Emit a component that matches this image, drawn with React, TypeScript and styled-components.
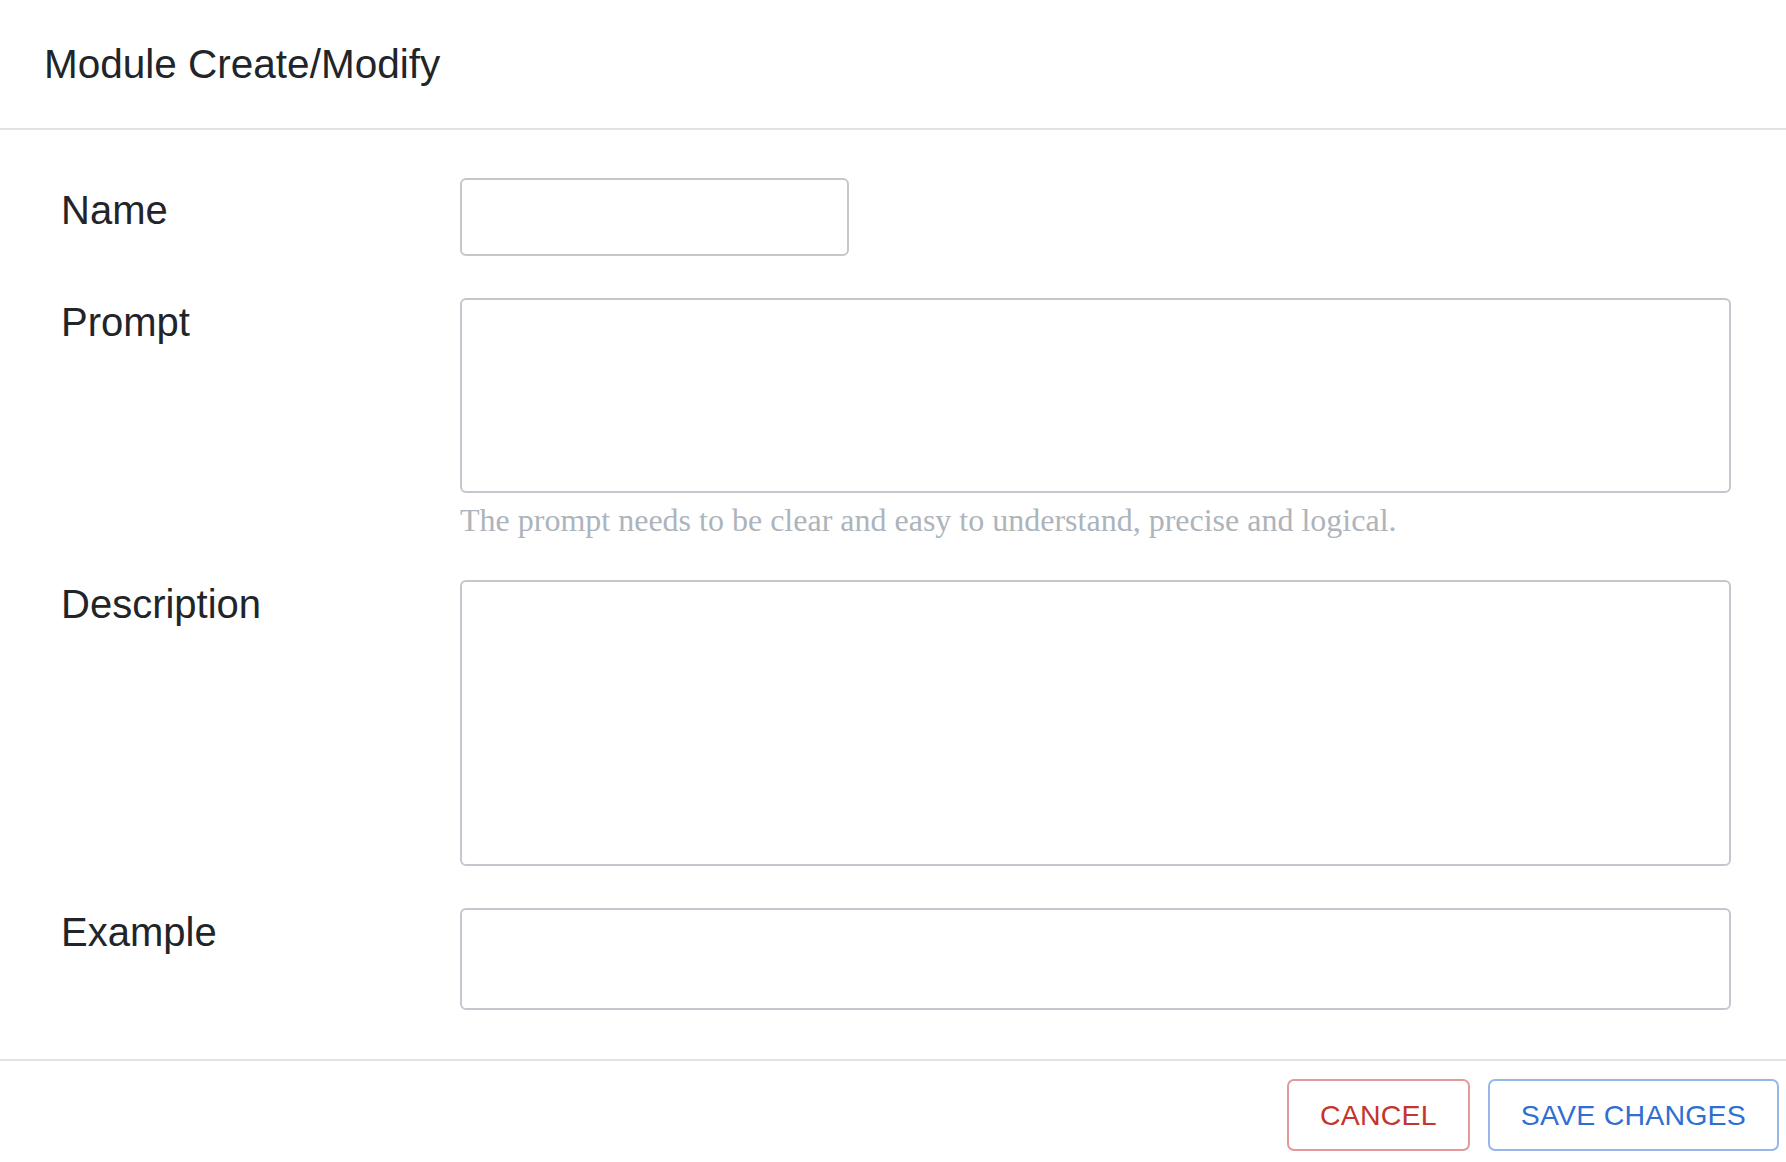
import React from "react";
import styled, { createGlobalStyle } from "styled-components";

const Global = createGlobalStyle`
  html, body { margin: 0; padding: 0; background: #ffffff; }
  body { font-family: "Liberation Sans", Arial, sans-serif; color: #212529; }
  * { box-sizing: border-box; }
`;

const Modal = styled.div`
  width: 1786px;
  min-height: 1162px;
  background: #fff;
  display: flex;
  flex-direction: column;
`;

const Header = styled.header`
  height: 130px;
  padding: 0 44px;
  display: flex;
  align-items: center;
  border-bottom: 2px solid #e2e2e2;
`;

const Title = styled.h5`
  margin: 0;
  font-size: 40.5px;
  line-height: 48px;
  font-weight: 400;
  color: #212529;
`;

const Body = styled.div`
  padding: 48px 55px 49px 61px;
  display: flex;
  flex-direction: column;
  gap: 42px;
`;

const Row = styled.div`
  display: grid;
  grid-template-columns: 399px 1fr;
  align-items: start;
`;

const Label = styled.label<{ $offset?: number }>`
  font-size: 40px;
  line-height: 48px;
  color: #212529;
  padding-top: ${(p) => p.$offset ?? 0}px;
`;

const FieldCol = styled.div`
  display: flex;
  flex-direction: column;
`;

const TextInput = styled.input`
  width: 389px;
  height: 78px;
  border: 2px solid #c7c7c7;
  border-radius: 6px;
  background: #fff;
  font-size: 30px;
  padding: 0 14px;
  outline: none;
`;

const Area = styled.textarea<{ $h: number }>`
  width: 100%;
  height: ${(p) => p.$h}px;
  border: 2px solid #c3c8ce;
  border-radius: 6px;
  background: #fff;
  resize: none;
  font-size: 30px;
  padding: 10px 14px;
  outline: none;
  display: block;
`;

const Help = styled.small`
  margin-top: 9px;
  font-family: "Liberation Serif", "Times New Roman", serif;
  font-size: 32px;
  line-height: 36px;
  color: #adb4bc;
`;

const Footer = styled.footer`
  border-top: 2px solid #e2e2e2;
  padding: 18px 7px 10px 0;
  display: flex;
  justify-content: flex-end;
  gap: 18px;
`;

const Button = styled.button<{ $tone: "red" | "blue" }>`
  height: 72px;
  padding: 0 31px;
  background: #fff;
  border: 2px solid ${(p) => (p.$tone === "red" ? "#e39a9a" : "#95b8ea")};
  color: ${(p) => (p.$tone === "red" ? "#c5352c" : "#2f6fd3")};
  border-radius: 7px;
  font-family: "Liberation Sans", Arial, sans-serif;
  font-size: 28.5px;
  letter-spacing: 0.2px;
  text-transform: uppercase;
  cursor: pointer;
`;

export default function App() {
  return (
    <>
      <Global />
      <Modal>
        <Header>
          <Title>Module Create/Modify</Title>
        </Header>
        <Body>
          <Row>
            <Label $offset={8}>Name</Label>
            <FieldCol>
              <TextInput type="text" />
            </FieldCol>
          </Row>
          <Row>
            <Label>Prompt</Label>
            <FieldCol>
              <Area $h={195} />
              <Help>
                The prompt needs to be clear and easy to understand, precise and logical.
              </Help>
            </FieldCol>
          </Row>
          <Row>
            <Label>Description</Label>
            <FieldCol>
              <Area $h={286} />
            </FieldCol>
          </Row>
          <Row>
            <Label>Example</Label>
            <FieldCol>
              <Area $h={102} />
            </FieldCol>
          </Row>
        </Body>
        <Footer>
          <Button $tone="red">Cancel</Button>
          <Button $tone="blue">Save Changes</Button>
        </Footer>
      </Modal>
    </>
  );
}
